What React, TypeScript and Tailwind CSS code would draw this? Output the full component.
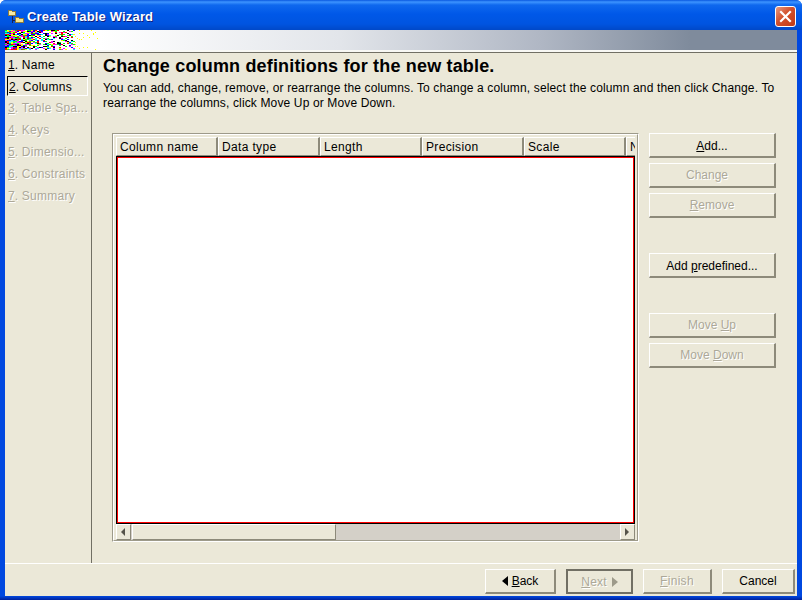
const SANS = "font-['Liberation_Sans',Arial,sans-serif]";

const steps = [
  { n: '1', label: 'Name', enabled: true },
  { n: '2', label: 'Columns', enabled: true, selected: true },
  { n: '3', label: 'Table Spa...' },
  { n: '4', label: 'Keys' },
  { n: '5', label: 'Dimensio...' },
  { n: '6', label: 'Constraints' },
  { n: '7', label: 'Summary' },
];

const columns = ['Column name', 'Data type', 'Length', 'Precision', 'Scale'];

// the banner's left end is a badly dithered logo, so it is just seeded noise
function NoiseStrip() {
  const colors = ['#000000', '#ff0000', '#00ff00', '#0000ff', '#00ffff', '#ff00ff', '#ffff00', '#ffffff'];
  const cells = [];
  let seed = 12345;
  const next = () => {
    seed = (seed * 1103515245 + 12345) & 0x7fffffff;
    return (seed >> 8) / 0x7fffff;
  };
  for (let y = 0; y < 20; y++) {
    for (let x = 0; x < 100; x += 2) {
      const r = next();
      const c = next();
      if (x < 70) {
        const fade = x / 70;
        if (r < fade * 0.7) continue;
        const idx = Math.floor(c * (x < 25 ? 7 : 8 - fade));
        cells.push(<rect key={x + '-' + y} x={x} y={y} width="2" height="1" fill={colors[idx]} />);
      } else if (r < 0.08 - (x - 70) / 600) {
        cells.push(<rect key={x + '-' + y} x={x} y={y} width="1" height="1" fill="#ffff00" />);
      }
    }
  }
  return (
    <svg width="100" height="20" viewBox="0 0 100 20" shapeRendering="crispEdges" className="block shrink-0">
      {cells}
    </svg>
  );
}

function Button({ label, u, disabled, className = '' }: { label: string; u?: string; disabled?: boolean; className?: string }) {
  const i = u ? label.indexOf(u) : -1;
  return (
    <div
      className={`flex h-[25px] items-center justify-center border-t border-l border-t-white border-l-white border-r-2 border-b-2 border-r-[#8d8a7a] border-b-[#8d8a7a] bg-[#ebe8d8] text-[12px] ${disabled ? 'text-[#aca899] [text-shadow:1px_1px_0_#fff]' : 'text-black'} ${className}`}
    >
      {i >= 0 ? (
        <span>
          {label.slice(0, i)}
          <span className="underline">{u}</span>
          {label.slice(i + 1)}
        </span>
      ) : (
        <span>{label}</span>
      )}
    </div>
  );
}

function ScrollButton({ dir }: { dir: 'left' | 'right' }) {
  return (
    <div className="flex h-[16px] w-[15px] shrink-0 items-center justify-center border-t border-l border-t-white border-l-white border-r border-b border-r-[#8d8a7a] border-b-[#8d8a7a] bg-[#ebe8d8]">
      <svg width="5" height="8" viewBox="0 0 5 8">
        <path d={dir === 'left' ? 'M4 0v8L0 4z' : 'M0 0v8l4-4z'} fill="#55534a" />
      </svg>
    </div>
  );
}

export default function App() {
  return (
    <div className={`flex h-[600px] w-[802px] flex-col overflow-hidden rounded-t-[6px] bg-[#0048e0] ${SANS}`}>
      {/* Title bar */}
      <div className="flex h-[30px] shrink-0 items-center bg-[linear-gradient(180deg,#0a58e0_0px,#3d94ff_2px,#0f68ee_5px,#0058e8_14px,#0054e0_24px,#0048c8_30px)] pl-[8px] pr-[6px] pt-[3px]">
        <svg width="16" height="15" viewBox="0 0 16 15" shapeRendering="crispEdges" className="shrink-0">
          <path d="M4 6v5.5h4" stroke="#1a2050" fill="none" />
          <path d="M4 7v7" stroke="#1a2050" fill="none" />
          <path d="M.5 1.5h3l1 1h3v4h-7z" fill="#f6eca4" stroke="#8a7a40" />
          <path d="M7.5 8.5h3l1 1h4v4h-8z" fill="#f6e690" stroke="#8a7a40" />
        </svg>
        <span className="ml-[3px] text-[13px] font-bold tracking-[0.16px] text-white [text-shadow:1px_1px_0_#0f1f80]">Create Table Wizard</span>
        <div className="ml-auto flex h-[21px] w-[21px] items-center justify-center rounded-[3px] border border-white bg-[linear-gradient(135deg,#e89a80,#d2502c_45%,#c03a16)]">
          <svg width="13" height="13" viewBox="0 0 13 13">
            <path d="M2 2l9 9M11 2l-9 9" stroke="#fff" strokeWidth="2.2" strokeLinecap="square" />
          </svg>
        </div>
      </div>

      {/* Window body */}
      <div className="mx-[5px] flex min-h-0 flex-1 flex-col bg-[#ebe8d8]">
        <div className="flex h-[20px] shrink-0 bg-[linear-gradient(90deg,#ffffff_0px,#ffffff_95px,#e2e5ea_335px,#b0b7c4_535px,#7f8b9c_685px,#7f8b9c_100%)]">
          <NoiseStrip />
        </div>
        <div className="h-[2px] shrink-0 bg-[#f8f8f4]" />
        <div className="h-[1px] shrink-0 bg-[#716f64]" />

        <div className="flex min-h-0 flex-1">
          {/* Steps */}
          <div className="flex w-[87px] shrink-0 flex-col border-r border-r-[#716f64] pt-[1px] text-[12px]">
            {steps.map((s) => (
              <div
                key={s.n}
                className={`ml-[2px] mr-[3px] mb-[2px] flex h-[20px] items-center pl-[1px] whitespace-nowrap ${s.selected ? 'border-t border-l border-t-black border-l-black border-r border-b border-r-white border-b-white' : ''} ${s.enabled ? 'pt-[1px] text-black' : 'text-[#aca899] [text-shadow:1px_1px_0_#fff]'}`}
              >
                <span className="underline">{s.n}</span>
                <span className="tracking-[0.25px]">. {s.label}</span>
              </div>
            ))}
          </div>

          {/* Page */}
          <div className="min-w-0 flex-1 pl-[11px] pt-[2px]">
            <h1 className="text-[18px] font-bold leading-[22px] tracking-[0.17px] text-black">Change column definitions for the new table.</h1>
            <p className="mt-[4px] w-[690px] text-[12px] leading-[15px] tracking-[0.14px] text-black">
              You can add, change, remove, or rearrange the columns. To change a column, select the column and then click Change. To rearrange the columns, click Move Up or Move Down.
            </p>

            <div className="mt-[22px] flex">
              {/* Table frame */}
              <div className="ml-[9px] h-[409px] w-[527px] shrink-0 border-t border-l border-t-[#9d9a8a] border-l-[#9d9a8a] border-r border-b border-r-white border-b-white">
                <div className="flex h-full flex-col border-t border-l border-t-white border-l-white border-r border-b border-r-[#9d9a8a] border-b-[#9d9a8a] pl-[2px] pr-[2px] pt-[2px]">
                  <div className="flex h-[19px] w-[519px] shrink-0 overflow-hidden">
                    {columns.map((c) => (
                      <div key={c} className="flex h-[19px] w-[102px] shrink-0 items-center border-t border-l border-t-white border-l-white border-r-2 border-b border-r-[#8d8a7a] border-b-[#8d8a7a] pl-[3px] text-[12px] tracking-[0.35px] text-black">
                        {c}
                      </div>
                    ))}
                    <div className="flex h-[19px] w-[12px] shrink-0 items-center overflow-hidden border-t border-l border-t-white border-l-white border-b border-b-[#8d8a7a] pl-[3px] text-[12px] text-black">
                      N
                    </div>
                  </div>
                  <div className="h-[368px] w-[519px] shrink-0 border border-black">
                    <div className="h-full border border-[#ff0000] bg-white" />
                  </div>
                  <div className="flex h-[16px] w-[519px] shrink-0 bg-[#d4d0c8]">
                    <ScrollButton dir="left" />
                    <div className="ml-[1px] h-[16px] w-[204px] border-t border-l border-t-white border-l-white border-r border-b border-r-[#8d8a7a] border-b-[#8d8a7a] bg-[#ebe8d8]" />
                    <div className="flex-1" />
                    <ScrollButton dir="right" />
                  </div>
                </div>
              </div>

              {/* Buttons */}
              <div className="ml-[10px] flex w-[127px] shrink-0 flex-col">
                <Button label="Add..." u="A" className="pt-[1px]" />
                <Button label="Change" disabled className="mt-[5px] pr-[10px]" />
                <Button label="Remove" u="R" disabled className="mt-[5px]" />
                <Button label="Add predefined..." u="p" className="mt-[35px] pt-[1px]" />
                <Button label="Move Up" u="U" disabled className="mt-[35px]" />
                <Button label="Move Down" u="D" disabled className="mt-[5px]" />
              </div>
            </div>
          </div>
        </div>

        {/* Footer */}
        <div className="flex h-[33px] shrink-0 items-start border-t border-t-white pl-[480px] pt-[5px]">
          <div className="flex h-[25px] w-[71px] shrink-0 items-center justify-center border-t border-l border-t-white border-l-white border-r-2 border-b-2 border-r-[#8d8a7a] border-b-[#8d8a7a] text-[12px] text-black">
            <svg width="6" height="10" viewBox="0 0 6 10" className="mr-[4px]"><path d="M6 0v10L0 5z" fill="#000" /></svg>
            <span><span className="underline">B</span>ack</span>
          </div>
          <div className="ml-[10px] flex h-[25px] w-[67px] shrink-0 items-center justify-center border-2 border-[#716f64] text-[12px] tracking-[0.2px] text-[#aca899] [text-shadow:1px_1px_0_#fff]">
            <span><span className="underline">N</span>ext</span>
            <svg width="6" height="10" viewBox="0 0 6 10" className="ml-[5px]"><path d="M0 0v10l6-5z" fill="#9d9a8a" /></svg>
          </div>
          <Button label="Finish" u="F" disabled className="ml-[10px] w-[69px] shrink-0 tracking-[0.3px]" />
          <Button label="Cancel" className="ml-[10px] w-[73px] shrink-0" />
        </div>
      </div>

      <div className="h-[4px] shrink-0 bg-[linear-gradient(180deg,#0048e0,#00209a)]" />
    </div>
  );
}
